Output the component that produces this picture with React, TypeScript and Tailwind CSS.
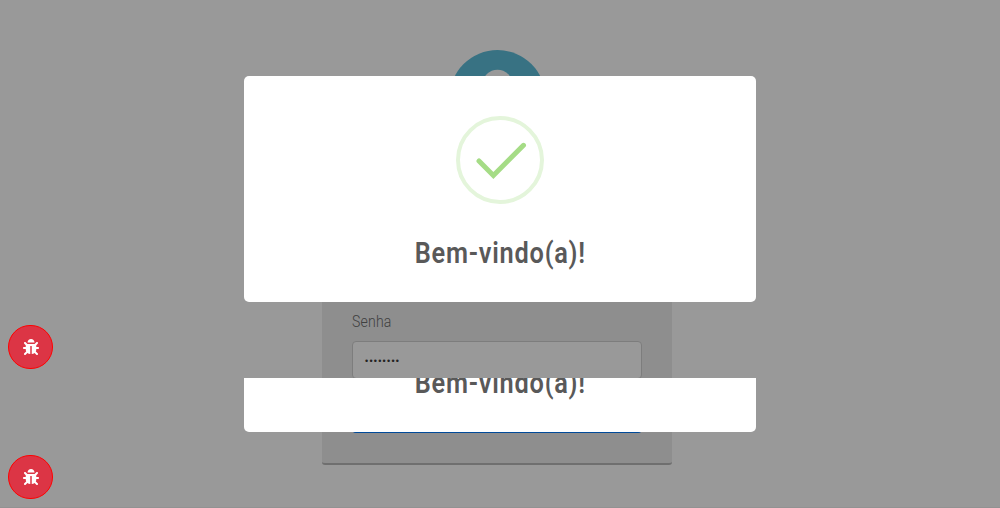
import { FaBug } from "react-icons/fa";

function Title() {
  return (
    <h2 className="origin-center scale-x-[0.845] whitespace-nowrap text-center text-[30px] leading-9 font-semibold tracking-[0.9px] text-[#595959]">
      Bem-vindo(a)!
    </h2>
  );
}

function SuccessIcon() {
  return (
    <svg className="h-[88px] w-[88px]" viewBox="0 0 88 88" fill="none">
      <circle cx="44" cy="44" r="42" stroke="#e4f5db" strokeWidth="4" />
      <path d="M23 45 37.4 59.4 67.5 29.3" stroke="#a5dc86" strokeWidth="5" strokeLinecap="round" strokeLinejoin="miter" />
    </svg>
  );
}

function WelcomeDialog() {
  return (
    <div className="flex h-[226px] w-[512px] shrink-0 flex-col items-center rounded-[5px] bg-white pt-10">
      <SuccessIcon />
      <div className="mt-[31px]">
        <Title />
      </div>
    </div>
  );
}

function BugButton() {
  return (
    <button className="flex h-[44px] w-[45px] items-center justify-center rounded-full border border-[#ff0000] bg-[#dc3545] text-white">
      <FaBug className="h-4 w-4" />
    </button>
  );
}

export default function App() {
  return (
    <div className="relative h-[508px] w-[1000px] overflow-hidden bg-[#999999] font-['Roboto',sans-serif]">
      <main className="flex h-full flex-col items-center border-b border-[#929292] pr-[6px] pt-[50px]">
        <svg className="h-24 w-24 shrink-0" viewBox="0 0 96 96">
          <circle cx="48.5" cy="48" r="48" fill="#387283" />
          <circle cx="48.5" cy="34.7" r="15" fill="#999999" />
        </svg>
        <form className="mt-[106px] flex h-[213px] w-[350px] shrink-0 flex-col rounded-[3px] border-b-2 border-[#6f6f6f] bg-[#8e8e8e] px-[30px] pt-[61px]">
          <label className="origin-left scale-x-[0.88] text-[16px] leading-[18px] font-light tracking-[0.2px] text-[#404040]">Senha</label>
          <div className="mt-[10px] flex h-[38px] shrink-0 items-center rounded-[4px] border border-[#7d7d7d] bg-[#999999] px-3 pt-[3px] text-[9px] leading-none tracking-[1.25px] text-[#222222] font-['Liberation_Sans',sans-serif]">
            ••••••••
          </div>
          <div className="mt-[16px] h-[38px] shrink-0 rounded-[4px] bg-[#004a99]" />
        </form>
      </main>
      <div className="absolute left-[244px] top-[76px]">
        <WelcomeDialog />
      </div>
      <div className="absolute left-[244px] top-[378px] flex h-[54px] items-end overflow-hidden">
        <WelcomeDialog />
      </div>
      <div className="absolute left-2 top-[325px] flex flex-col gap-[86px]">
        <BugButton />
        <BugButton />
      </div>
    </div>
  );
}
